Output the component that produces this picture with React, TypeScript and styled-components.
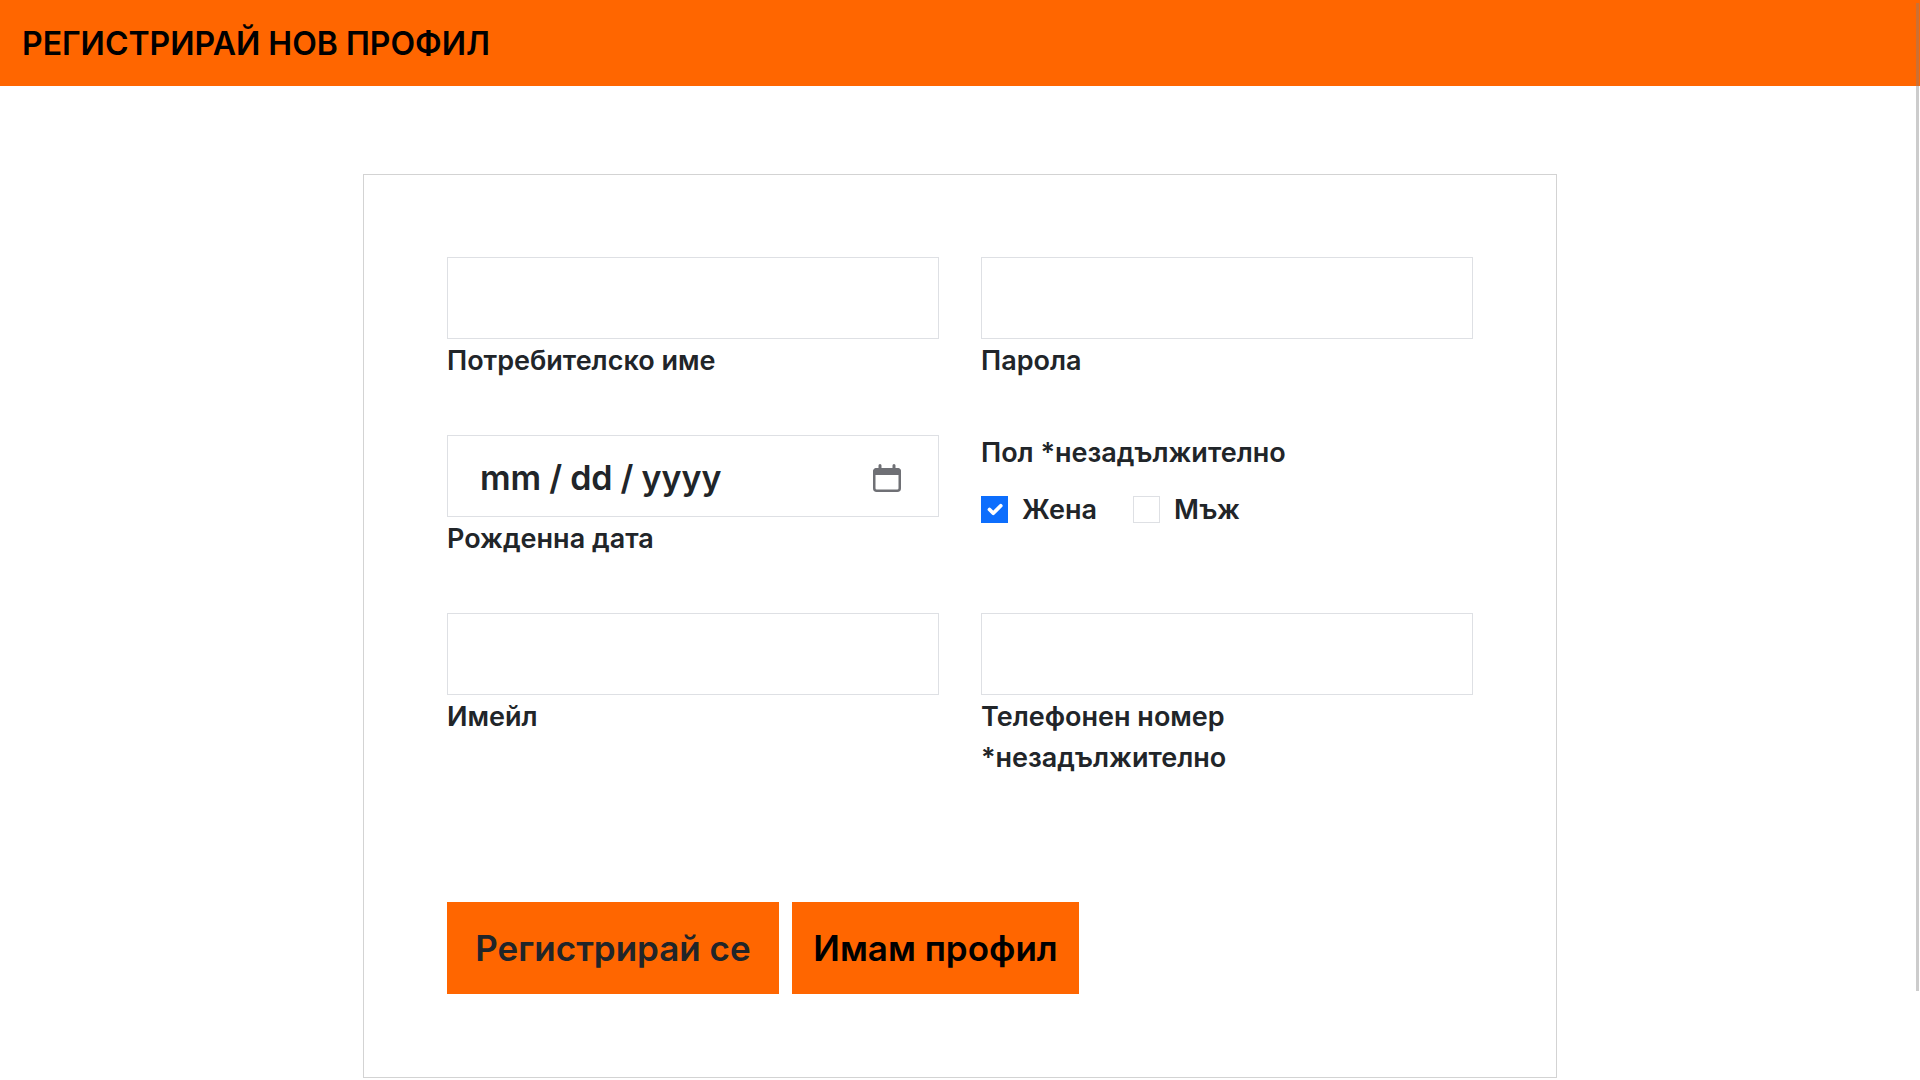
import React, { useState } from "react";
import styled, { createGlobalStyle, css } from "styled-components";

const GlobalStyle = createGlobalStyle`
  *, *::before, *::after { box-sizing: border-box; }
  body {
    margin: 0;
    background: #fff;
    color: #212529;
    font-family: Inter, "Open Sans", sans-serif;
    font-size: 27px;
    font-weight: 600;
    line-height: 41px;
  }
`;

const Header = styled.header`
  padding: 23px 22px 21px;
  background: #ff6600;
  color: #000;
`;

const Title = styled.h1`
  margin: 0;
  font-size: 32px;
  font-weight: 600;
  line-height: 42px;
  text-transform: uppercase;
`;

const Main = styled.main`
  padding: 88px 16px 0;
`;

const Card = styled.form`
  max-width: 1194px;
  margin: 0 auto;
  padding: 82px 83px 83px;
  border: 1px solid #d3d3d3;
`;

const Fields = styled.div`
  display: grid;
  grid-template-columns: repeat(2, minmax(0, 1fr));
  gap: 54px 42px;
`;

const Field = styled.div`
  display: flex;
  flex-direction: column;
  gap: 1px;
`;

const TextInput = styled.input`
  width: 100%;
  height: 82px;
  padding: 16px 31px 13px;
  border: 1px solid #dee0e4;
  border-radius: 0;
  background: #fff;
  color: inherit;
  font: inherit;
  font-size: 34px;
  line-height: 51px;

  &::-webkit-datetime-edit-text {
    padding: 0 7px;
  }

  &::-webkit-calendar-picker-indicator {
    width: 28px;
    height: 28px;
    margin: 0 6px 0 0;
    padding: 0;
    background: center / contain no-repeat
      url("data:image/svg+xml,%3csvg xmlns='http://www.w3.org/2000/svg' viewBox='0 0 28 28'%3e%3cg fill='none' stroke='%236f7075'%3e%3crect x='1.25' y='5.25' width='25.5' height='21.5' rx='2.5' stroke-width='2.5'/%3e%3cpath stroke-width='3' stroke-linecap='round' d='M7 1.5v5M21 1.5v5'/%3e%3c/g%3e%3cpath fill='%236f7075' d='M0 11V8a4 4 0 0 1 4-4h20a4 4 0 0 1 4 4v3z'/%3e%3c/svg%3e");
  }
`;

const LabelLine = styled.span`
  display: block;
`;

const Group = styled.fieldset`
  min-width: 0;
  margin: 0;
  padding: 0;
  border: 0;
`;

const Legend = styled.legend`
  padding: 0;
  line-height: 36px;
  margin-bottom: 18px;
`;

const Choices = styled.div`
  display: flex;
  gap: 36px;
`;

const Choice = styled.label`
  display: flex;
  align-items: center;
  gap: 14px;
`;

const Tick = styled.input`
  appearance: none;
  width: 27px;
  height: 27px;
  margin: 0;
  border: 1px solid #dee0e4;
  background: #fff center / contain no-repeat;

  &:checked {
    border-color: #0d6efd;
    background-color: #0d6efd;
    background-image: url("data:image/svg+xml,%3csvg xmlns='http://www.w3.org/2000/svg' viewBox='0 0 20 20'%3e%3cpath fill='none' stroke='%23fff' stroke-linecap='round' stroke-linejoin='round' stroke-width='3' d='m6 10 3 3 6-6'/%3e%3c/svg%3e");
  }
`;

const Actions = styled.div`
  display: flex;
  gap: 13px;
  margin-top: 124px;
`;

const action = css`
  padding: 20px 21px;
  border: 0;
  background: #ff6600;
  font: inherit;
  font-size: 35px;
  line-height: 52px;
  text-align: center;
  text-decoration: none;
  white-space: nowrap;
  cursor: pointer;
`;

const SubmitButton = styled.button`
  ${action}
  min-width: 332px;
  color: #212529;
`;

const ProfileLink = styled.a`
  ${action}
  min-width: 287px;
  color: #000;
`;

const ScrollThumb = styled.div`
  position: fixed;
  top: 3px;
  right: 1px;
  bottom: 89px;
  width: 3px;
  background: rgba(128, 128, 128, 0.4);
`;

type FormFieldProps = {
  id: string;
  type: string;
  label: string[];
};

function FormField({ id, type, label }: FormFieldProps) {
  return (
    <Field>
      <TextInput id={id} name={id} type={type} />
      <label htmlFor={id}>
        {label.map((line) => (
          <LabelLine key={line}>{line}</LabelLine>
        ))}
      </label>
    </Field>
  );
}

export default function App() {
  const [gender, setGender] = useState("female");

  return (
    <>
      <GlobalStyle />
      <Header>
        <Title>Регистрирай нов профил</Title>
      </Header>
      <Main>
        <Card onSubmit={(event) => event.preventDefault()}>
          <Fields>
            <FormField id="username" type="text" label={["Потребителско име"]} />
            <FormField id="password" type="password" label={["Парола"]} />
            <FormField id="birthdate" type="date" label={["Рожденна дата"]} />
            <Group>
              <Legend>Пол *незадължително</Legend>
              <Choices>
                <Choice>
                  <Tick
                    type="checkbox"
                    checked={gender === "female"}
                    onChange={() => setGender(gender === "female" ? "" : "female")}
                  />
                  Жена
                </Choice>
                <Choice>
                  <Tick
                    type="checkbox"
                    checked={gender === "male"}
                    onChange={() => setGender(gender === "male" ? "" : "male")}
                  />
                  Мъж
                </Choice>
              </Choices>
            </Group>
            <FormField id="email" type="email" label={["Имейл"]} />
            <FormField id="phone" type="tel" label={["Телефонен номер", "*незадължително"]} />
          </Fields>
          <Actions>
            <SubmitButton type="submit">Регистрирай се</SubmitButton>
            <ProfileLink href="#login">Имам профил</ProfileLink>
          </Actions>
        </Card>
      </Main>
      <ScrollThumb />
    </>
  );
}
